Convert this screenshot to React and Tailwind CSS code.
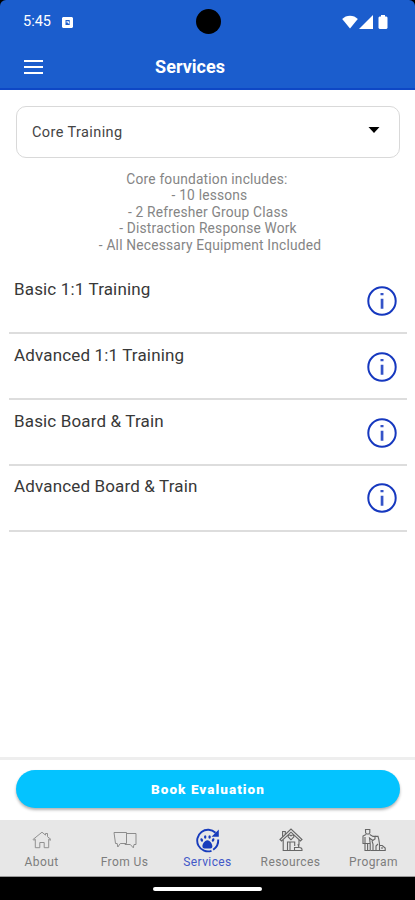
const services = [
  "Basic 1:1 Training",
  "Advanced 1:1 Training",
  "Basic Board & Train",
  "Advanced Board & Train",
];

const details = [
  { text: "Core foundation includes:", shift: "pr-[1px]" },
  { text: "- 10 lessons", shift: "pl-[4px]" },
  { text: "- 2 Refresher Group Class", shift: "pl-[1px]" },
  { text: "- Distraction Response Work", shift: "pl-[1px]" },
  { text: "- All Necessary Equipment Included", shift: "pl-[5px]" },
];

function StatusBar() {
  return (
    <div className="flex h-11 items-center pl-[23px] pr-[27px]">
      <span className="text-[14.5px] leading-none">5:45</span>
      <svg className="ml-[11px]" width="11" height="11" viewBox="0 0 11 11">
        <path fillRule="evenodd" fill="#fff" d="M1 0h9l1 1v9l-1 1H1l-1-1V1zM3.500 3v5h4.200V3z" />
        <path fill="#fff" d="M4.500 4.200h2.200l.8 2.300h-1.600V5.600H4.500z" />
      </svg>
      <div className="ml-auto flex items-center">
        <svg width="16" height="14" viewBox="0 0 16 14">
          <path fill="#fff" d="M0.2 4C4 -.5 12 -.5 15.8 4L8 13.500z" />
        </svg>
        <svg className="ml-px" width="14" height="14" viewBox="0 0 14 14">
          <path fill="#fff" d="M14 0v14H0z" />
        </svg>
        <svg className="ml-[5px]" width="10" height="14" viewBox="0 0 10 14">
          <path fill="#fff" d="M3 0h4v1.500h1.500l1 1V13l-1 1h-7l-1-1V2.500l1-1H3z" />
        </svg>
      </div>
    </div>
  );
}

function InfoIcon() {
  return (
    <svg width="30" height="30" viewBox="0 0 30 30">
      <circle cx="15" cy="15" r="13.700" fill="none" stroke="#1638bf" strokeWidth="2" />
      <path fill="#3453c8" d="M13.500 6.900h3v2.400h-3zM13.700 12.700h2.700v10h-2.700z" />
    </svg>
  );
}

function HomeIcon() {
  return (
    <svg width="20" height="18" viewBox="0 0 20 18" fill="none" stroke="#8c8c8c" strokeWidth="0.950">
      <path d="M1 8.500 10 1.200l3.500 2.900V2.500h2v3.200L19 8.500l-.8.8-1.500-1.100v8.500h-4.500v-5.200H7.800v5.200H3.300V8.200L1.800 9.300z" />
    </svg>
  );
}

function ChatIcon() {
  return (
    <svg width="24" height="18" viewBox="0 0 24 18" fill="none" stroke="#888888" strokeWidth="0.950">
      <path d="M1 1.500h12.500v11H7.300L4.800 16l-.6-3.500H2.500z" />
      <path d="M14 2.500h9v11h-2l-.7 3.300-3-3.300h-5.300v-1" />
    </svg>
  );
}

function PawIcon() {
  return (
    <svg width="25" height="25" viewBox="0 0 25 25">
      <path fill="none" stroke="#183cbc" strokeWidth="1.900" d="M20.500 4.800A10.800 10.800 0 1 0 16.500 22.800" />
      <path fill="none" stroke="#183cbc" strokeWidth="1.900" d="M23.200 11.500c.3 4.300-1.900 8.200-5 10.300" />
      <path fill="#183cbc" d="M23.800 1.500v7.300h-7.300l2.300-2.300 2.500-2.400zM12.400 12.300c2.900 0 5 4.200 5 5.900 0 2.600-2.400 2.300-5 2.300s-5 .3-5-2.300c0-1.700 2.100-5.900 5-5.900z" />
      <g fill="#183cbc">
        <ellipse cx="6.700" cy="12" rx="1.200" ry="1.800" transform="rotate(-25 6.700 12)" />
        <ellipse cx="10.200" cy="9" rx="1.200" ry="1.800" />
        <ellipse cx="14.600" cy="9" rx="1.200" ry="1.800" />
        <ellipse cx="18.100" cy="12" rx="1.200" ry="1.800" transform="rotate(25 18.100 12)" />
      </g>
    </svg>
  );
}

function ShelterIcon() {
  return (
    <svg width="24" height="24" viewBox="0 0 24 24" fill="none" stroke="#666666" strokeWidth="1.100">
      <path d="M1 11.500 12 1l11 10.500-1.600 1.500L12 4.200 2.600 13z" />
      <path d="M4.200 12v10.500h4.300V14h7.200v4M20 12v5.500M3.600 8.700V3.500h2.700v2.700" />
      <path d="M12 11.800 9.200 9c-.8-1.600 1.400-3 2.800-1.100 1.400-1.900 3.600-.5 2.800 1.100z" />
      <path d="M8.500 22.500h14.500c.3-2-.8-3-2.800-3h-4.700v3M11 14v8.500M20 19.500l-1-3.500" />
    </svg>
  );
}

function TrainerIcon() {
  return (
    <svg width="24" height="24" viewBox="0 0 24 24" fill="none" stroke="#666666" strokeWidth="1.100">
      <path d="M3.500 1.500h4.300v3.300L6.800 6H4.600l-1-1.200z" />
      <path d="M4 6.500 1 8v7.500h2v7h5.200v-7L7.500 10l3.200 2.500 2.300-1.600V8.400h-2L7.700 6.500M3 9v6.500h5M5.600 15.500v7" />
      <path d="M13 8.400h3l.8 3 .7 4.600v6.500H8.600M11 22v-6l-1-3M14 22v-4l2-2" />
      <path d="M17.500 17.500h2.700l3 2.500v2.500h-5.700M20 19v2" />
    </svg>
  );
}

const tabs = [
  { label: "About", Icon: HomeIcon },
  { label: "From Us", Icon: ChatIcon },
  { label: "Services", Icon: PawIcon, active: true },
  { label: "Resources", Icon: ShelterIcon },
  { label: "Program", Icon: TrainerIcon },
];

export default function App() {
  return (
    <div className="flex h-[900px] w-[415px] flex-col overflow-hidden bg-black font-['Roboto',sans-serif]">
      <header className="relative h-[90px] shrink-0 rounded-t-[6px] border-b-2 border-[#0e47c5] bg-[#1b5dcd] text-white">
        <div className="absolute left-[195.5px] top-[9px] size-[25px] rounded-full bg-black" />
        <StatusBar />
        <div className="grid h-[45px] grid-cols-[1fr_auto_1fr] items-center px-6">
          <div className="flex w-[19px] flex-col gap-[4px]">
            <span className="h-[2px] bg-white" />
            <span className="h-[2px] bg-white" />
            <span className="h-[2px] bg-white" />
          </div>
          <h1 className="-ml-[35px] text-[18px] font-bold leading-none">Services</h1>
        </div>
      </header>

      <main className="flex min-h-0 flex-1 flex-col bg-white">
        <div className="ml-4 mr-[15px] mt-4 flex h-[52px] shrink-0 items-center justify-between rounded-[10px] border border-[#d9d9d9] pl-[15px] pr-[19px]">
          <span className="mt-[3px] text-[14.5px] leading-none tracking-[0.4px] text-[#444444]">Core Training</span>
          <svg className="-mt-[5px]" width="12" height="6" viewBox="0 0 12 6">
            <path d="M.5 0h11L6 6z" />
          </svg>
        </div>

        <div className="mt-[13px] flex shrink-0 flex-col items-center text-[13.75px] leading-[16.400px] text-[#858585]">
          {details.map(({ text, shift }) => (
            <p key={text} className={`whitespace-pre tracking-[0.2px] ${shift}`}>{text}</p>
          ))}
        </div>

        <ul className="ml-[9px] mr-[8px] mt-[15.5px] shrink-0">
          {services.map((name) => (
            <li key={name} className="flex h-[65.800px] justify-between border-b-2 border-[#dddddd] pl-[5px] pr-[10px]">
              <span className="mt-[10.5px] text-[17px] leading-5 tracking-[0.15px] text-[#383838]">{name}</span>
              <span className="mt-[17.500px]"><InfoIcon /></span>
            </li>
          ))}
        </ul>

        <div className="mt-auto h-[63px] shrink-0 border-t-[3px] border-[#eeeeee] pl-4 pr-[15px] pt-[10px]">
          <button className="block h-[38px] w-full rounded-full bg-[#04c3ff] pt-[2px] text-[13.5px] font-black leading-none tracking-[1.05px] text-white shadow-[0_2px_3px_rgba(0,0,0,0.3)]">
            Book Evaluation
          </button>
        </div>
      </main>

      <nav className="grid h-[57px] shrink-0 grid-cols-5 border-b border-[#999999] bg-[#e7e7e7]">
        {tabs.map(({ label, Icon, active }) => (
          <div key={label} className={`flex flex-col items-center ${active ? "text-[#4258c8]" : "text-[#7d7d7d]"}`}>
            <span className="mt-[7px] flex h-[26px] items-center"><Icon /></span>
            <span className="mt-[3px] text-[12px] leading-3 tracking-[0.4px]">{label}</span>
          </div>
        ))}
      </nav>
      <div className="flex h-[23px] shrink-0 items-center justify-center">
        <div className="h-[4px] w-[109px] rounded-full bg-white" />
      </div>
    </div>
  );
}
